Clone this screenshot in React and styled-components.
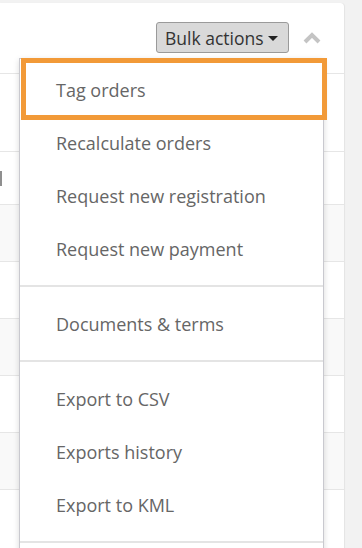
import React from "react";
import styled, { createGlobalStyle } from "styled-components";

const GlobalStyle = createGlobalStyle`
  html, body {
    margin: 0;
    padding: 0;
    background: #f2f2f2;
    font-family: "Open Sans", "Noto Sans", sans-serif;
  }
`;

const menuGroups = [
  ["Tag orders", "Recalculate orders", "Request new registration", "Request new payment"],
  ["Documents & terms"],
  ["Export to CSV", "Exports history", "Export to KML"],
  [""],
];

const rows = [
  { height: 77 },
  { height: 52, mark: true },
  { height: 56, striped: true },
  { height: 56 },
  { height: 56, striped: true },
  { height: 56 },
  { height: 56, striped: true },
  { height: 60 },
];

const App = () => {
  return (
    <Page>
      <GlobalStyle />
      <Panel>
        <Header>
          <BulkButton>
            Bulk actions
            <Caret />
          </BulkButton>
          <Collapse>
            <svg width="18" height="13" viewBox="0 0 18 13">
              <polyline
                points="2,11 9,4 16,11"
                fill="none"
                stroke="#c4c4c4"
                strokeWidth="4"
              />
            </svg>
          </Collapse>
        </Header>
        <Table>
          {rows.map((r, i) => (
            <Row key={i} $h={r.height} $striped={r.striped}>
              {r.mark && <Mark />}
            </Row>
          ))}
        </Table>
        <Menu>
          {menuGroups.map((group, gi) => (
            <Group key={gi}>
              {group.map((label, i) => (
                <Item key={label + i} $active={gi === 0 && i === 0}>
                  {label}
                </Item>
              ))}
            </Group>
          ))}
        </Menu>
      </Panel>
    </Page>
  );
};

const Page = styled.div`
  width: 362px;
  height: 548px;
  overflow: hidden;
  padding-top: 3px;
  box-sizing: border-box;
`;

const Panel = styled.div`
  position: relative;
  width: 344px;
  background: #fff;
  border-radius: 0 4px 0 0;
  box-shadow: 1px 0 1px rgba(0, 0, 0, 0.06);
  min-height: 560px;
`;

const Header = styled.div`
  height: 71px;
  box-sizing: border-box;
  border-bottom: 1px solid #e6e6e6;
  display: flex;
  justify-content: flex-end;
  align-items: flex-start;
  padding: 19px 23px 0 0;
`;

const BulkButton = styled.button`
  display: flex;
  align-items: center;
  gap: 4px;
  height: 31px;
  width: 133px;
  box-sizing: border-box;
  padding: 0 0 0 8px;
  background: #d9d9d9;
  border: 1px solid #9a9a9a;
  border-radius: 3px;
  font-family: inherit;
  font-size: 17.5px;
  color: #333;
  white-space: nowrap;
`;

const Caret = styled.span`
  width: 0;
  height: 0;
  border-left: 5px solid transparent;
  border-right: 5px solid transparent;
  border-top: 5px solid #222;
  margin-top: 2px;
`;

const Collapse = styled.div`
  margin: 9px 0 0 14px;
  display: flex;
`;

const Table = styled.div`
  display: flex;
  flex-direction: column;
`;

const Row = styled.div`
  height: ${(p) => p.$h}px;
  background: ${(p) => (p.$striped ? "#f9f9f9" : "#fff")};
  border-bottom: 1px solid #e6e6e6;
  display: flex;
  align-items: center;
`;

const Mark = styled.span`
  width: 2px;
  height: 15px;
  background: #8f8f8f;
`;

const Menu = styled.div`
  position: absolute;
  top: 55px;
  left: 19px;
  width: 303px;
  background: #fff;
  border: 1px solid #c9c9cf;
  box-shadow: 0 2px 6px rgba(0, 0, 0, 0.15);
`;

const Group = styled.div`
  padding: 10px 0;
  &:first-child {
    padding-top: 4px;
  }
  & + & {
    border-top: 2px solid #e4e4e4;
  }
`;

const Item = styled.div`
  position: relative;
  height: 53px;
  display: flex;
  align-items: center;
  padding-left: 36px;
  font-size: 18px;
  color: #666;
  white-space: nowrap;

  &::after {
    content: "";
    display: ${(p) => (p.$active ? "block" : "none")};
    position: absolute;
    top: -5px;
    bottom: -4px;
    left: 1px;
    right: -4px;
    border: 5px solid #f29a38;
  }
`;

export default App;
